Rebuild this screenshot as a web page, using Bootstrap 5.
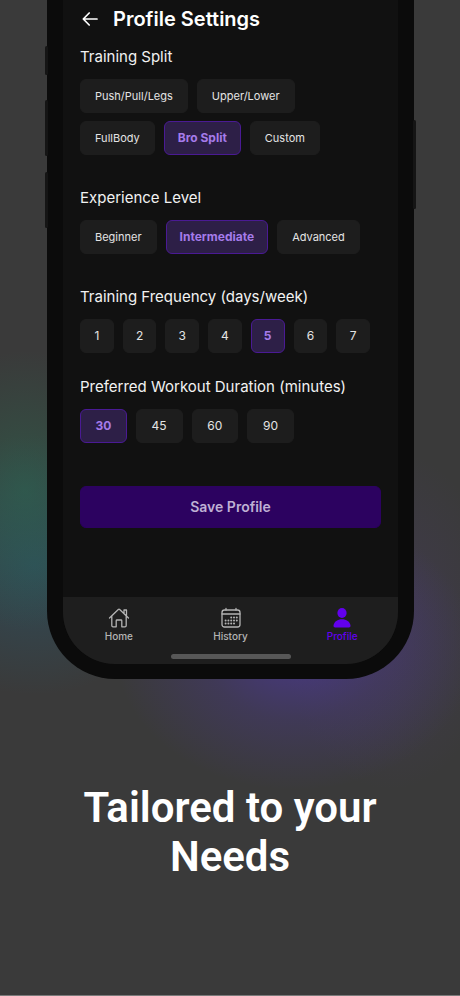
<!DOCTYPE html>
<html lang="en">
<head>
<meta charset="utf-8">
<meta name="viewport" content="width=device-width, initial-scale=1">
<title>Profile Settings</title>
<link href="https://cdn.jsdelivr.net/npm/bootstrap@5.3.0/dist/css/bootstrap.min.css" rel="stylesheet">
<style>
  body {
    font-family: Inter, "Liberation Sans", sans-serif;
    color: #f2f2f2;
    border-bottom: 1px solid #7a7a7a;
    background:
      radial-gradient(180px 140px at 295px 650px, rgba(80, 56, 170, .65), rgba(78, 55, 160, .28) 50%, transparent),
      radial-gradient(110px 170px at 390px 620px, rgba(80, 60, 120, .3), transparent),
      radial-gradient(110px 140px at 25px 490px, rgba(40, 115, 85, .45), transparent),
      radial-gradient(140px 130px at 35px 565px, rgba(38, 92, 115, .5), transparent),
      #3a3a3a;
  }
  .phone {
    margin: 0 46px 0 47px;
    padding: 0 16px 15px;
    background: #0b0b0b;
    border-radius: 0 0 68px 68px;
  }
  .side-key { position: absolute; width: 3px; background: #151515; border-radius: 2px; }
  .key-mute { left: -2px; top: 46px; height: 29px; }
  .key-up { left: -2px; top: 100px; height: 56px; }
  .key-down { left: -2px; top: 172px; height: 56px; }
  .key-power { right: -2px; top: 120px; height: 89px; }
  .screen { background: #111; border-radius: 0 0 52px 52px; overflow: hidden; }
  .settings { padding: 5px 17px 69px; }
  .title-bar { gap: 13px; margin-bottom: 14px; }
  .title-bar h1 { font-size: 20px; line-height: 28px; font-weight: 600; color: #fff; }
  .back { width: 20px; height: 28px; color: #fff; }
  fieldset { margin-bottom: 33px; }
  fieldset.tight { margin-bottom: 24px; }
  fieldset.last { margin-bottom: 43px; }
  legend { font-size: 15px; line-height: 20px; margin-bottom: 12px; }
  .chips { display: flex; flex-wrap: wrap; gap: 8px 9px; max-width: 290px; }
  .chips-days { display: grid; grid-template-columns: repeat(7, 1fr); }
  .chips-mins { display: grid; grid-template-columns: repeat(4, 1fr); max-width: 214px; }
  .chip {
    --bs-btn-font-size: 11px;
    --bs-btn-line-height: 18px;
    --bs-btn-padding-x: 14px;
    --bs-btn-padding-y: 7px;
    --bs-btn-color: #e4e4e4;
    --bs-btn-bg: #1d1d1d;
    --bs-btn-border-color: #1d1d1d;
    --bs-btn-border-radius: 6px;
    --bs-btn-hover-color: #fff;
    --bs-btn-hover-bg: #262626;
    --bs-btn-active-color: #a57bea;
    --bs-btn-active-bg: #2d1f47;
    --bs-btn-active-border-color: #4a1a94;
  }
  .btn-check:checked + .chip { --bs-btn-font-size: 12px; --bs-btn-padding-x: 13px; font-weight: 700; }
  .chips-days .chip, .chips-mins .chip { --bs-btn-font-size: 12px; padding-left: 0; padding-right: 0; }
  .save {
    --bs-btn-font-size: 14px;
    --bs-btn-line-height: 20px;
    --bs-btn-padding-y: 10px;
    --bs-btn-font-weight: 600;
    --bs-btn-color: #bfb0d4;
    --bs-btn-bg: #2c0260;
    --bs-btn-border-color: #2c0260;
    --bs-btn-border-radius: 6px;
    --bs-btn-hover-color: #fff;
    --bs-btn-hover-bg: #390580;
  }
  .tabs { background: #1e1e1e; padding-bottom: 5px; }
  .tabs a { color: #b4b4b4; font-size: 10px; line-height: 12px; font-weight: 500; padding: 10px 0 12px; gap: 1px; }
  .tabs a.active { color: #6200ee; }
  .home-bar { width: 120px; height: 5px; background: #575757; }
  .tagline {
    font-family: Roboto, "Liberation Sans", sans-serif;
    font-size: 42px; line-height: 49px; font-weight: 600; color: #fff;
    max-width: 340px; padding: 104px 0 32px;
  }
</style>
</head>
<body class="min-vh-100">
<div class="phone position-relative">
  <span class="side-key key-mute"></span>
  <span class="side-key key-up"></span>
  <span class="side-key key-down"></span>
  <span class="side-key key-power"></span>
  <div class="screen position-relative">
    <main class="settings">
      <header class="title-bar d-flex align-items-center">
        <button type="button" class="back btn p-0 border-0 d-flex align-items-center justify-content-center" aria-label="Back">
          <svg width="20" height="20" viewBox="0 0 20 20" fill="none" stroke="currentColor" stroke-width="1.7" stroke-linecap="round" stroke-linejoin="round"><path d="M17 10H3.500M9.200 4 3.300 10l5.900 6"/></svg>
        </button>
        <h1 class="m-0">Profile Settings</h1>
      </header>
      <form>
        <fieldset>
          <legend>Training Split</legend>
          <div class="chips">
            <input class="btn-check" type="radio" name="split" id="s1"><label class="btn chip" for="s1">Push/Pull/Legs</label>
            <input class="btn-check" type="radio" name="split" id="s2"><label class="btn chip" for="s2">Upper/Lower</label>
            <input class="btn-check" type="radio" name="split" id="s3"><label class="btn chip" for="s3">FullBody</label>
            <input class="btn-check" type="radio" name="split" id="s4" checked><label class="btn chip" for="s4">Bro Split</label>
            <input class="btn-check" type="radio" name="split" id="s5"><label class="btn chip" for="s5">Custom</label>
          </div>
        </fieldset>
        <fieldset>
          <legend>Experience Level</legend>
          <div class="chips">
            <input class="btn-check" type="radio" name="level" id="l1"><label class="btn chip" for="l1">Beginner</label>
            <input class="btn-check" type="radio" name="level" id="l2" checked><label class="btn chip" for="l2">Intermediate</label>
            <input class="btn-check" type="radio" name="level" id="l3"><label class="btn chip" for="l3">Advanced</label>
          </div>
        </fieldset>
        <fieldset class="tight">
          <legend>Training Frequency (days/week)</legend>
          <div class="chips chips-days">
            <input class="btn-check" type="radio" name="days" id="d1"><label class="btn chip" for="d1">1</label>
            <input class="btn-check" type="radio" name="days" id="d2"><label class="btn chip" for="d2">2</label>
            <input class="btn-check" type="radio" name="days" id="d3"><label class="btn chip" for="d3">3</label>
            <input class="btn-check" type="radio" name="days" id="d4"><label class="btn chip" for="d4">4</label>
            <input class="btn-check" type="radio" name="days" id="d5" checked><label class="btn chip" for="d5">5</label>
            <input class="btn-check" type="radio" name="days" id="d6"><label class="btn chip" for="d6">6</label>
            <input class="btn-check" type="radio" name="days" id="d7"><label class="btn chip" for="d7">7</label>
          </div>
        </fieldset>
        <fieldset class="last">
          <legend>Preferred Workout Duration (minutes)</legend>
          <div class="chips chips-mins">
            <input class="btn-check" type="radio" name="mins" id="m30" checked><label class="btn chip" for="m30">30</label>
            <input class="btn-check" type="radio" name="mins" id="m45"><label class="btn chip" for="m45">45</label>
            <input class="btn-check" type="radio" name="mins" id="m60"><label class="btn chip" for="m60">60</label>
            <input class="btn-check" type="radio" name="mins" id="m90"><label class="btn chip" for="m90">90</label>
          </div>
        </fieldset>
        <button type="submit" class="btn save w-100">Save Profile</button>
      </form>
    </main>
    <nav class="tabs">
      <div class="d-flex">
        <a href="#home" class="w-100 d-flex flex-column align-items-center text-decoration-none">
          <svg width="22" height="22" viewBox="0 0 22 22" fill="none" stroke="currentColor" stroke-width="1.3" stroke-linecap="round" stroke-linejoin="round"><path d="M1.500 11 10.300 2.500q.7-.6 1.400 0L20.500 11M16 6.500V3h2.500v6M3.800 9v9.600q0 1.200 1.200 1.200h3.200v-6q0-.8.8-.8h4q.8 0 .8.800v6H17q1.200 0 1.200-1.200V9"/></svg>
          Home
        </a>
        <a href="#history" class="w-100 d-flex flex-column align-items-center text-decoration-none">
          <svg width="22" height="22" viewBox="0 0 22 22" fill="none" stroke="currentColor" stroke-width="1.300" stroke-linecap="round"><rect x="2" y="3" width="18" height="17" rx="2.500"/><path d="M2 7h18M6 1.500V3M16 1.500V3"/><g stroke-width="2"><path d="M11.200 10.500h.01M14 10.500h.01M16.800 10.500h.01M5.600 13.500h.01M8.400 13.500h.01M11.200 13.500h.01M14 13.500h.01M16.800 13.500h.01M5.600 16.500h.01M8.400 16.500h.01M11.200 16.500h.01M14 16.500h.01"/></g></svg>
          History
        </a>
        <a href="#profile" class="active w-100 d-flex flex-column align-items-center text-decoration-none" aria-current="page">
          <svg width="22" height="22" viewBox="0 0 22 22" fill="currentColor"><ellipse cx="11" cy="6" rx="4.600" ry="5"/><path d="M2.500 18.500c.5-4 4.200-6.300 8.500-6.300s8 2.300 8.500 6.300c.1 1.200-.6 2-1.600 2H4.100c-1 0-1.700-.8-1.600-2z"/></svg>
          Profile
        </a>
      </div>
      <div class="home-bar rounded-pill mx-auto"></div>
    </nav>
  </div>
</div>
<h2 class="tagline text-center mx-auto mb-0">Tailored to your Needs</h2>
<script src="https://cdn.jsdelivr.net/npm/bootstrap@5.3.0/dist/js/bootstrap.bundle.min.js"></script>
</body>
</html>
